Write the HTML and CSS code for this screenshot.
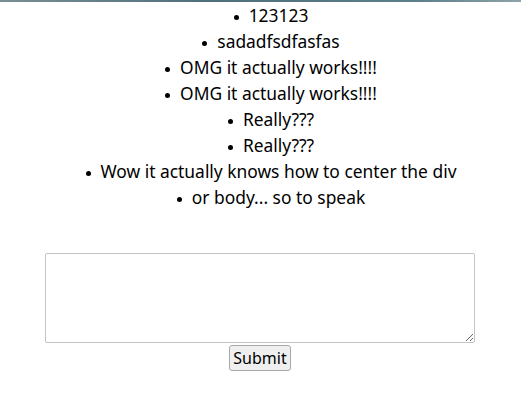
FILE: index.html
```html
<!DOCTYPE html>
<html lang="en">
<head>
<meta charset="UTF-8">
<meta name="viewport" content="width=device-width, initial-scale=1.0">
<title>Messages</title>
<link rel="stylesheet" href="styles.css">
</head>
<body>
<div class="topbar"></div>
<div class="page">
    <ul class="messages">
        <li>123123</li>
        <li>sadadfsdfasfas</li>
        <li>OMG it actually works!!!!</li>
        <li>OMG it actually works!!!!</li>
        <li>Really???</li>
        <li>Really???</li>
        <li>Wow it actually knows how to center the div</li>
        <li>or body... so to speak</li>
    </ul>

    <form class="message-form">
        <textarea id="message"></textarea>
        <button type="button">Submit</button>
    </form>
</div>
</body>
</html>
```

FILE: styles.css
```css
body {
    font-family: "Noto Sans", sans-serif;
    margin: 0;
    color: #000;
    background: #fff;
}

.topbar {
    height: 2px;
    background: linear-gradient(to right, #7a8e96, #4f6f7a 40%, #5c7f8a 80%, #8fa3aa);
}

.page {
    display: flex;
    flex-direction: column;
    align-items: center;
}

.messages {
    list-style: none;
    padding: 0 0 0 36px;
    margin: 0;
    text-align: center;
    font-size: 17.4px;
    line-height: 26px;
}

.messages li::before {
    content: "";
    display: inline-block;
    width: 5px;
    height: 5px;
    border-radius: 50%;
    background: #000;
    margin-left: -15px;
    margin-right: 10px;
    vertical-align: middle;
}

.message-form {
    display: flex;
    flex-direction: column;
    align-items: center;
    margin-top: 43px;
    padding-right: 1px;
}

textarea {
    width: 430px;
    height: 90px;
    box-sizing: border-box;
    border: 1px solid #c4c4c4;
    border-radius: 2px;
    margin: 0;
}

button {
    font-family: "Noto Sans", sans-serif;
    font-size: 16px;
    margin-top: 2px;
    padding: 1px 3px;
    background: #efefef;
    border: 1px solid #a8a8a8;
    border-radius: 3px;
}
```
